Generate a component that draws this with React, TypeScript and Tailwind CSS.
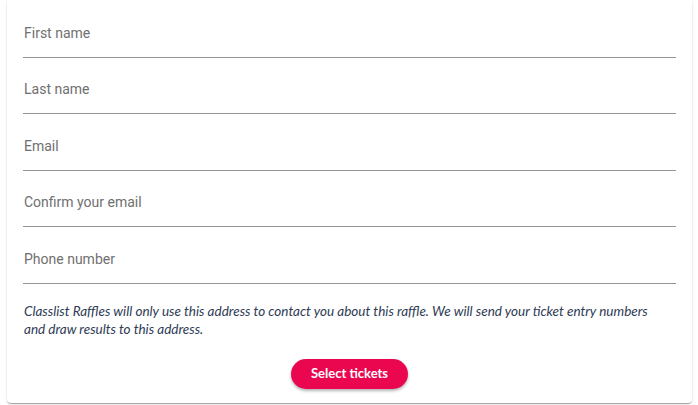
export default function App() {
  const fields = [
    { label: 'First name', h: 'h-[58px]' },
    { label: 'Last name', h: 'h-[56px]' },
    { label: 'Email', h: 'h-[57px]' },
    { label: 'Confirm your email', h: 'h-[56px]' },
    { label: 'Phone number', h: 'h-[57px]' },
  ];

  return (
    <div className="bg-white w-[698px] h-[405px] overflow-hidden">
      <div className="ml-[7px] w-[685px] bg-white rounded-b-[4px] px-4 pb-[14px] shadow-[0_2px_1px_-1px_rgba(0,0,0,0.2),0_1px_1px_0_rgba(0,0,0,0.14),0_1px_3px_0_rgba(0,0,0,0.12)]">
        {fields.map(f => (
          <div key={f.label} className={`${f.h} flex items-end border-b border-[#949494]`}>
            <span className="pl-px pb-[16px] leading-4 text-[14px] text-[#6f6f6f] font-['Roboto',sans-serif]">
              {f.label}
            </span>
          </div>
        ))}

        <p className="mt-[18px] pl-px pr-4 text-[13.5px] leading-[18px] italic text-[#2e3b55] font-['Lato',sans-serif]">
          Classlist Raffles will only use this address to contact you about this raffle. We will send your ticket entry numbers and draw results to this address.
        </p>

        <div className="flex justify-center mt-[21px]">
          <button className="w-[117px] h-[30px] rounded-full bg-[#eb0650] text-white text-[13px] font-bold font-['Lato',sans-serif] shadow-[0_2px_3px_rgba(0,0,0,0.3)]">
            Select tickets
          </button>
        </div>
      </div>
    </div>
  );
}
